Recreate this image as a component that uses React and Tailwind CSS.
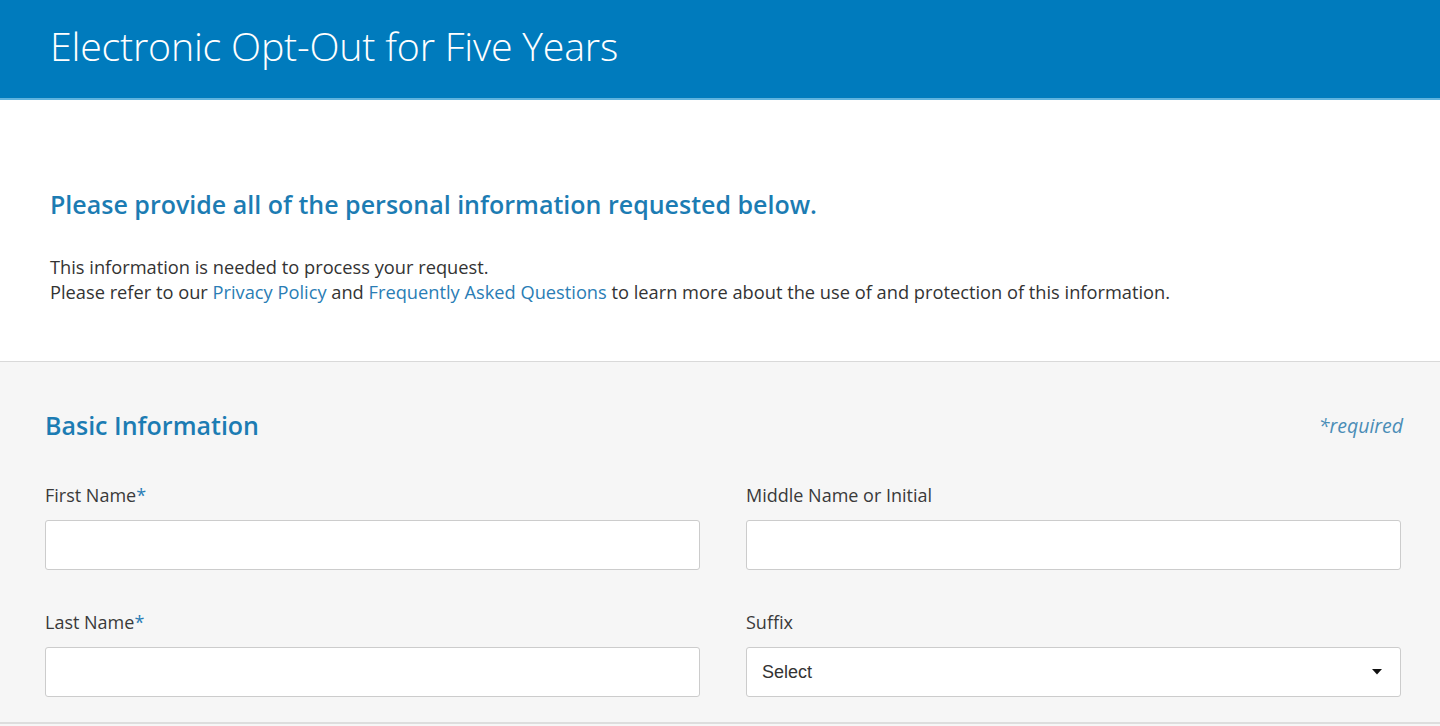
export default function App() {
  const font = { fontFamily: '"Open Sans", "Noto Sans", sans-serif' };
  return (
    <div className="min-h-[726px] bg-[#f6f6f6] overflow-hidden" style={font}>
      <header className="h-[100px] bg-[#007bbd] border-b-2 border-[#5fb3de] flex items-center px-[50px] pb-[4px]">
        <h1 className="text-[39.3px] font-light text-white leading-none tracking-[-0.2px]">Electronic Opt-Out for Five Years</h1>
      </header>
      <section className="bg-white h-[262px] border-b border-[#d9d9d9] px-[50px] pt-[88px]">
        <h2 className="text-[25px] font-semibold text-[#1c7cb3] leading-[32px]">Please provide all of the personal information requested below.</h2>
        <p className="mt-[34px] text-[18.25px] leading-[25px] text-[#333333]">
          This information is needed to process your request.
          <br />
          Please refer to our <a className="text-[#2a7db5]">Privacy Policy</a> and <a className="text-[#2a7db5]">Frequently Asked Questions</a> to learn more about the use of and protection of this information.
        </p>
      </section>
      <section className="bg-[#f6f6f6] px-[45px] pt-[47px] pb-[25px] border-b-2 border-[#dddddd] w-[1446px]">
        <div className="flex items-center justify-between w-[1358px] h-[34px]">
          <h3 className="text-[25px] font-semibold text-[#1c7cb3]">Basic Information</h3>
          <span className="text-[19.5px] italic text-[#4a8db6]">*required</span>
        </div>
        <div className="grid grid-cols-[655px_655px] gap-x-[46px] gap-y-[40px] mt-[40px]">
          <Field label="First Name" required />
          <Field label="Middle Name or Initial" />
          <Field label="Last Name" required />
          <div>
            <label className="block text-[18px] leading-[24px] text-[#3a3a3a]">Suffix</label>
            <div className="mt-[13px] h-[50px] bg-white border border-[#cccccc] rounded-[3px] flex items-center justify-between pl-[15px] pr-[18px]">
              <span className="text-[18px] text-[#333333]" style={{ fontFamily: '"Liberation Sans", Arial, sans-serif' }}>Select</span>
              <svg width="10" height="6" viewBox="0 0 10 6"><path d="M0 0h10L5 5.5z" fill="#111" /></svg>
            </div>
          </div>
        </div>
      </section>
    </div>
  );
}

function Field({ label, required }) {
  return (
    <div>
      <label className="block text-[18px] leading-[24px] text-[#3a3a3a]">
        {label}
        {required && <span className="text-[#2a7db5]">*</span>}
      </label>
      <div className="mt-[13px] h-[50px] bg-white border border-[#cccccc] rounded-[3px]" />
    </div>
  );
}
